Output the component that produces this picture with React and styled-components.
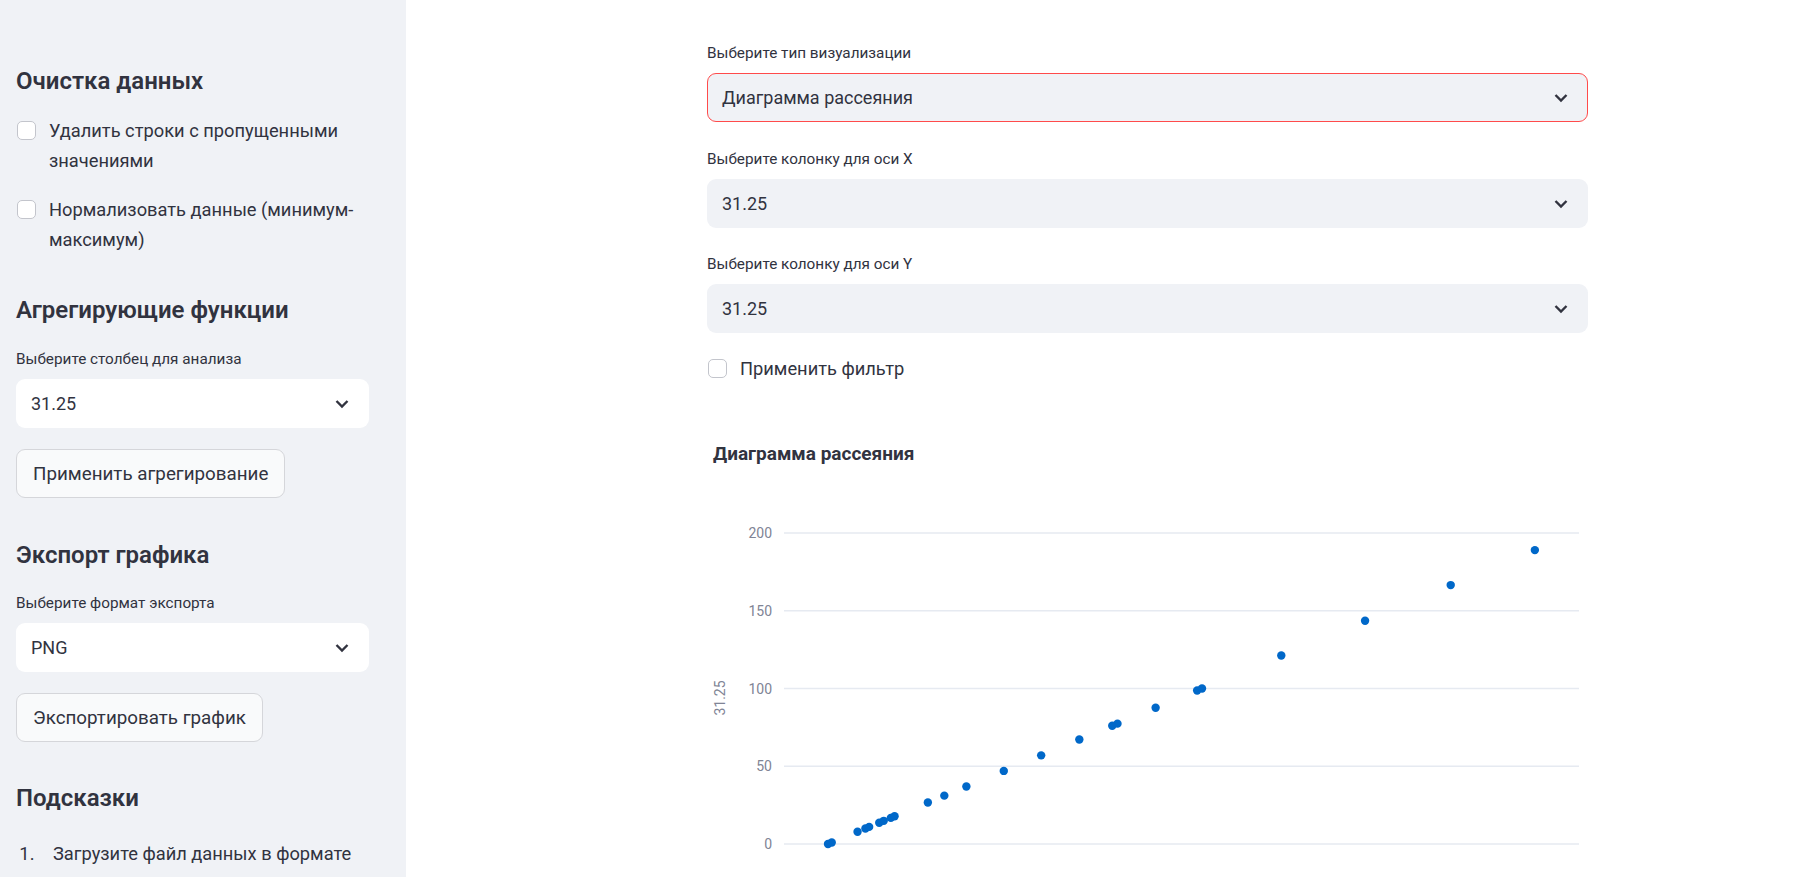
import styled, { createGlobalStyle } from "styled-components";

const GlobalStyle = createGlobalStyle`
  body {
    margin: 0;
    font-family: Roboto, "Noto Sans", sans-serif;
    color: #31333f;
    background: #ffffff;
  }
  * { box-sizing: border-box; }
`;

const points = [
  0, 1, 7.9, 10, 11, 13.7, 14.9, 16.8, 17.8, 26.7, 31.1, 37, 47, 57, 67.2,
  76, 77.4, 87.6, 98.7, 100, 121.2, 143.6, 166.5, 189,
];

const Chevron = () => (
  <svg width="16" height="10" viewBox="0 0 16 10">
    <polyline
      points="2.5,2 8,7.5 13.5,2"
      fill="none"
      stroke="#31333f"
      strokeWidth="2.4"
    />
  </svg>
);

const Select = ({ value, $variant }) => (
  <SelectBox $variant={$variant}>
    <span>{value}</span>
    <Chevron />
  </SelectBox>
);

const Check = ({ children, $mt }) => (
  <CheckRow $mt={$mt}>
    <Box />
    <span>{children}</span>
  </CheckRow>
);

const Chart = () => {
  const grid = [200, 150, 100, 50, 0];
  const y = (v) => 423 - v * 1.555;
  const x = (v) => 121 + v * 3.74;
  return (
    <ChartSvg width="881" height="480">
      <text x="6" y="39" fontSize="19" fontWeight="700" fill="#31333f">
        Диаграмма рассеяния
      </text>
      {grid.map((g) => (
        <g key={g}>
          <line x1="77" x2="872" y1={y(g)} y2={y(g)} stroke="#e6eaf1" strokeWidth="1.3" />
          <text
            x="65"
            y={y(g) + 5}
            fontSize="14"
            textAnchor="end"
            fill="#808495"
          >
            {g}
          </text>
        </g>
      ))}
      <text
        x="0"
        y="0"
        fontSize="14"
        fill="#808495"
        textAnchor="middle"
        transform="translate(18 277) rotate(-90)"
      >
        31.25
      </text>
      {points.map((v, i) => (
        <circle key={i} cx={x(v)} cy={y(v)} r="4.2" fill="#0068c9" />
      ))}
    </ChartSvg>
  );
};

export default function App() {
  return (
    <>
      <GlobalStyle />
      <Page>
        <Sidebar>
          <SideHeading>Очистка данных</SideHeading>
          <Check $mt={20}>Удалить строки с пропущенными значениями</Check>
          <Check $mt={19}>Нормализовать данные (минимум-максимум)</Check>

          <SideHeading $mt={40}>Агрегирующие функции</SideHeading>
          <Label $mt={23}>Выберите столбец для анализа</Label>
          <Select value="31.25" $variant="white" />
          <Button>Применить агрегирование</Button>

          <SideHeading $mt={42}>Экспорт графика</SideHeading>
          <Label $mt={22}>Выберите формат экспорта</Label>
          <Select value="PNG" $variant="white" />
          <Button>Экспортировать график</Button>

          <SideHeading $mt={41}>Подсказки</SideHeading>
          <Tips>
            <li>Загрузите файл данных в формате</li>
          </Tips>
        </Sidebar>

        <Main>
          <Column>
            <Label>Выберите тип визуализации</Label>
            <Select value="Диаграмма рассеяния" $variant="focus" />
            <Label $mt={26}>Выберите колонку для оси X</Label>
            <Select value="31.25" />
            <Label $mt={25}>Выберите колонку для оси Y</Label>
            <Select value="31.25" />
            <Check $mt={21}>Применить фильтр</Check>
            <Chart />
          </Column>
        </Main>
      </Page>
    </>
  );
}

const Page = styled.div`
  display: flex;
  height: 100vh;
  overflow: hidden;
`;

const Sidebar = styled.aside`
  width: 406px;
  flex-shrink: 0;
  background: #f0f2f6;
  padding: 66px 37px 0 16px;
  display: flex;
  flex-direction: column;
  overflow: hidden;
  & > * {
    flex-shrink: 0;
  }
`;

const Main = styled.main`
  flex: 1;
  padding: 42px 0 0 301px;
  overflow: hidden;
`;

const Column = styled.div`
  width: 881px;
  display: flex;
  flex-direction: column;
  & > * {
    flex-shrink: 0;
  }
`;

const SideHeading = styled.h2`
  margin: ${(p) => p.$mt || 0}px 0 0;
  font-size: 24px;
  font-weight: 600;
  line-height: 30px;
  color: #31333f;
`;

const Label = styled.div`
  margin-top: ${(p) => p.$mt || 0}px;
  margin-bottom: 9px;
  font-size: 15.3px;
  line-height: 22px;
  color: #31333f;
`;

const SelectBox = styled.div`
  height: 49px;
  display: flex;
  align-items: center;
  justify-content: space-between;
  padding: 0 18px 0 14px;
  border-radius: 9px;
  font-size: 18px;
  color: #31333f;
  background: ${(p) => (p.$variant === "white" ? "#ffffff" : "#f0f2f6")};
  border: 1px solid
    ${(p) => (p.$variant === "focus" ? "#ff4b4b" : "transparent")};
`;

const CheckRow = styled.label`
  margin-top: ${(p) => p.$mt || 0}px;
  display: flex;
  align-items: flex-start;
  gap: 13px;
  font-size: 18.3px;
  line-height: 30px;
  color: #31333f;
`;

const Box = styled.span`
  flex-shrink: 0;
  width: 19px;
  height: 19px;
  margin: 5px 0 0 1px;
  border: 1px solid #c3c5cc;
  border-radius: 5px;
  background: #ffffff;
`;

const Button = styled.button`
  align-self: flex-start;
  margin-top: 21px;
  height: 49px;
  padding: 0 16px;
  border: 1px solid #d5d6da;
  border-radius: 9px;
  background: #f9fafb;
  font-family: inherit;
  font-size: 18.8px;
  color: #31333f;
`;

const Tips = styled.ol`
  margin: 26px 0 0;
  padding-left: 23px;
  font-size: 18.3px;
  line-height: 30px;
  color: #31333f;
  li {
    padding-left: 14px;
  }
`;

const ChartSvg = styled.svg`
  margin-top: 37px;
  display: block;
  font-family: Roboto, "Noto Sans", sans-serif;
`;
